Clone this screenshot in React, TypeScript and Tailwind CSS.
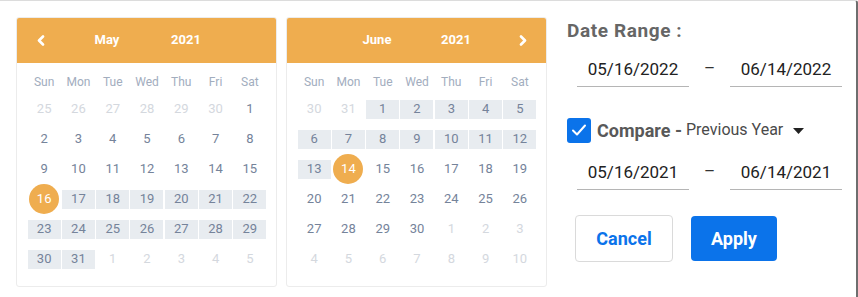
import React from "react";

type Day = { n: number; kind: "muted" | "plain" | "range" | "picked" };

const mayDays: Day[][] = [
  [25, 26, 27, 28, 29, 30].map((n) => ({ n, kind: "muted" as const })).concat([{ n: 1, kind: "plain" }]),
  [2, 3, 4, 5, 6, 7, 8].map((n) => ({ n, kind: "plain" as const })),
  [9, 10, 11, 12, 13, 14, 15].map((n) => ({ n, kind: "plain" as const })),
  [{ n: 16, kind: "picked" as const }, ...[17, 18, 19, 20, 21, 22].map((n) => ({ n, kind: "range" as const }))],
  [23, 24, 25, 26, 27, 28, 29].map((n) => ({ n, kind: "range" as const })),
  [
    ...[30, 31].map((n) => ({ n, kind: "range" as const })),
    ...[1, 2, 3, 4, 5].map((n) => ({ n, kind: "muted" as const })),
  ],
];

const juneDays: Day[][] = [
  [
    ...[30, 31].map((n) => ({ n, kind: "muted" as const })),
    ...[1, 2, 3, 4, 5].map((n) => ({ n, kind: "range" as const })),
  ],
  [6, 7, 8, 9, 10, 11, 12].map((n) => ({ n, kind: "range" as const })),
  [
    { n: 13, kind: "range" as const },
    { n: 14, kind: "picked" as const },
    ...[15, 16, 17, 18, 19].map((n) => ({ n, kind: "plain" as const })),
  ],
  [20, 21, 22, 23, 24, 25, 26].map((n) => ({ n, kind: "plain" as const })),
  [
    ...[27, 28, 29, 30].map((n) => ({ n, kind: "plain" as const })),
    ...[1, 2, 3].map((n) => ({ n, kind: "muted" as const })),
  ],
  [4, 5, 6, 7, 8, 9, 10].map((n) => ({ n, kind: "muted" as const })),
];

const weekDays = ["Sun", "Mon", "Tue", "Wed", "Thu", "Fri", "Sat"];

const Chevron = ({ dir }: { dir: "left" | "right" }) => (
  <svg width="8" height="11" viewBox="0 0 8 11" fill="none">
    <path
      d={dir === "left" ? "M6 1.5 L2 5.5 L6 9.5" : "M2 1.5 L6 5.5 L2 9.5"}
      stroke="white"
      strokeWidth="2.6"
      strokeLinecap="round"
      strokeLinejoin="round"
    />
  </svg>
);

const DayCell = ({ day }: { day: Day }) => {
  if (day.kind === "picked") {
    return (
      <div className="h-[30px] flex items-center justify-center">
        <span className="w-[30px] h-[30px] rounded-full bg-[#efad4f] text-white flex items-center justify-center">
          {day.n}
        </span>
      </div>
    );
  }
  return (
    <div className="h-[30px] flex items-center justify-center">
      <span
        className={`w-[33px] h-[19px] flex items-center justify-center ${
          day.kind === "range" ? "bg-[#e8ecf0] text-[#75839a]" : ""
        } ${day.kind === "plain" ? "text-[#75839a]" : ""} ${
          day.kind === "muted" ? "text-[#d4d8de]" : ""
        }`}
      >
        {day.n}
      </span>
    </div>
  );
};

const Calendar = ({
  month,
  year,
  rows,
  side,
}: {
  month: string;
  year: string;
  rows: Day[][];
  side: "left" | "right";
}) => (
  <div className="w-[261px] h-[270px] rounded-[3px] border border-[#ececec] overflow-hidden">
    <div className="h-[46px] bg-[#efad4f] flex items-center text-white font-bold text-[13px] -mx-px -mt-px">
      <div className="w-[49px] flex justify-center">{side === "left" && <Chevron dir="left" />}</div>
      <div className="w-[84px] text-center">{month}</div>
      <div className="w-[74px] text-center">{year}</div>
      <div className="flex-1" />
      <div className="w-[49px] flex justify-center">{side === "right" && <Chevron dir="right" />}</div>
    </div>
    <div className="pt-[7px] pl-[10px]">
      <div className="grid grid-cols-7 w-[240px] h-[24px] items-center text-[12px] text-[#a2adbe]">
        {weekDays.map((d) => (
          <div key={d} className="text-center">
            {d}
          </div>
        ))}
      </div>
      <div className="grid grid-cols-7 w-[240px] text-[13px]">
        {rows.flat().map((day, i) => (
          <DayCell key={i} day={day} />
        ))}
      </div>
    </div>
  </div>
);

const DateInput = ({ value }: { value: string }) => (
  <div className="w-[112px] h-[34px] border-b border-[#b5b5b5] flex items-center justify-center text-[17px] text-[#222]">
    {value}
  </div>
);

const DateRow = ({ from, to }: { from: string; to: string }) => (
  <div className="flex items-center ml-[10px]">
    <DateInput value={from} />
    <div className="w-[41px] text-center text-[17px] text-[#333] -mt-[2px]">–</div>
    <DateInput value={to} />
  </div>
);

export default function App() {
  return (
    <div
      className="w-[858px] h-[297px] bg-white border-t border-t-[#dcdcdc] border-r-2 border-r-[#6e6e6e] rounded-tr-[3px] flex"
      style={{ fontFamily: "Roboto, 'Liberation Sans', sans-serif" }}
    >
      <div className="flex gap-[9px] pt-[16px] pl-[16px]">
        <Calendar month="May" year="2021" rows={mayDays} side="left" />
        <Calendar month="June" year="2021" rows={juneDays} side="right" />
      </div>
      <div className="ml-[20px] pt-[18px] flex flex-col">
        <div className="h-[24px] leading-[24px] text-[19px] tracking-[0.6px] font-bold text-[#666]">
          Date Range :
        </div>
        <div className="mt-[10px]">
          <DateRow from="05/16/2022" to="06/14/2022" />
        </div>
        <div className="mt-[30px] h-[26px] flex items-center">
          <span className="w-[24px] h-[25px] rounded-[3px] bg-[#0b73ea] flex items-center justify-center">
            <svg width="18" height="18" viewBox="0 0 18 18" fill="none">
              <path d="M3 9.5 L7 13.5 L15 4.5" stroke="white" strokeWidth="2" strokeLinecap="round" strokeLinejoin="round" />
            </svg>
          </span>
          <span className="ml-[6px] text-[18px] font-bold text-[#595959]">Compare -</span>
          <span className="ml-[4px] text-[16px] text-[#4a4a4a]">Previous Year</span>
          <svg className="ml-[10px] mt-[2px]" width="11" height="6" viewBox="0 0 11 6">
            <path d="M0 0 H11 L5.5 6 Z" fill="#222" />
          </svg>
        </div>
        <div className="mt-[13px]">
          <DateRow from="05/16/2021" to="06/14/2021" />
        </div>
        <div className="mt-[25px] ml-[8px] flex items-center gap-[18px]">
          <button className="w-[98px] h-[47px] rounded-[4px] border border-[#dadada] bg-white text-[18px] font-bold text-[#0b73ea]">
            Cancel
          </button>
          <button className="w-[86px] h-[45px] rounded-[4px] bg-[#0b73ea] text-[18px] font-bold text-white">
            Apply
          </button>
        </div>
      </div>
    </div>
  );
}
